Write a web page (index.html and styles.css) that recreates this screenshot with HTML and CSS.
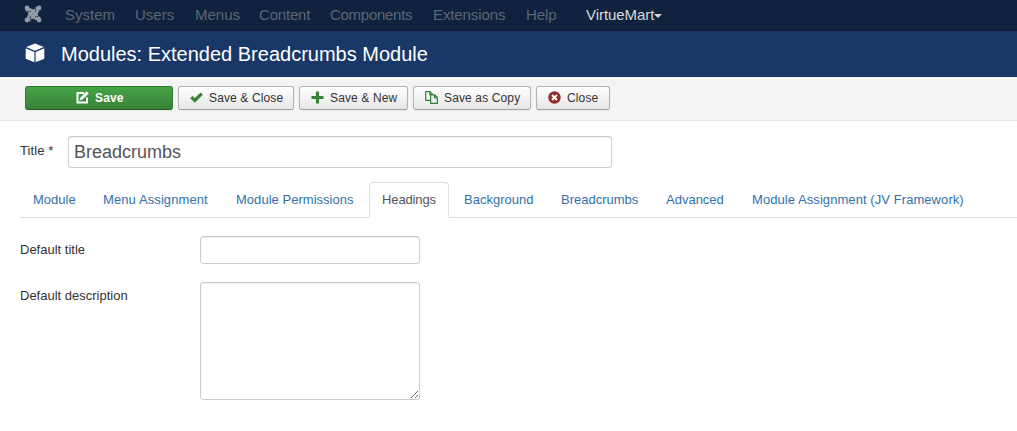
FILE: index.html
```html
<!DOCTYPE html>
<html lang="en">
<head>
<meta charset="utf-8">
<title>Modules: Extended Breadcrumbs Module</title>
<link rel="stylesheet" href="styles.css">
</head>
<body>
<nav class="navbar">
  <svg class="brand" viewBox="0 0 18 18" width="18" height="18">
    <g fill="none" stroke="currentColor" stroke-width="2.700">
      <path d="M3 6.500C3 4 6 3.600 7.800 5.400L13.500 11"/>
      <path d="M11.500 3C14 3 14.400 6 12.600 7.800L7 13.500"/>
      <path d="M15 11.500C15 14 12 14.400 10.200 12.600L4.500 7"/>
      <path d="M6.500 15C4 15 3.600 12 5.400 10.200L11 4.500"/>
    </g>
    <g fill="currentColor"><circle cx="3" cy="3" r="2.400"/><circle cx="15" cy="3" r="2.400"/><circle cx="3" cy="15" r="2.400"/><circle cx="15" cy="15" r="2.400"/></g>
  </svg>
  <ul class="menu">
    <li class="m-system">System</li><li class="m-users">Users</li><li class="m-menus">Menus</li><li class="m-content">Content</li><li class="m-components">Components</li><li class="m-extensions">Extensions</li><li class="m-help">Help</li>
    <li class="enabled">VirtueMart<span class="caret"></span></li>
  </ul>
</nav>
<header class="header">
  <svg class="cube" viewBox="0 0 20 20" width="20" height="20" fill="#fff">
    <path d="M10 .5 18.800 4 10 7.800 1.200 4Z"/><path d="M.7 5.200 9.400 8.900V19.300L.7 15.800Z"/><path d="M19.300 5.200 10.600 8.900V19.300L19.300 15.800Z"/>
  </svg>
  <h1>Modules: Extended Breadcrumbs Module</h1>
</header>
<div class="toolbar">
  <button class="btn save"><svg viewBox="0 0 13 13" width="13" height="13"><path d="M8 2H1.500V11.500H11V6.500" fill="none" stroke="#fff" stroke-width="2"/><path d="M3.500 9.500 4.500 6.500 10.600.3 12.800 2.500 6.500 8.600Z" fill="#fff"/></svg><span>Save</span></button>
  <button class="btn close-save"><svg viewBox="0 0 13 13" width="13" height="13"><path d="M1.300 6.200 4.800 9.500 11.700 2.700" fill="none" stroke="#378137" stroke-width="3.200"/></svg><span>Save &amp; Close</span></button>
  <button class="btn new"><svg viewBox="0 0 13 13" width="13" height="13"><path d="M6.500.5V12.500M.5 6.500H12.500" stroke="#378137" stroke-width="3"/></svg><span>Save &amp; New</span></button>
  <button class="btn copy"><svg viewBox="0 0 13 13" width="13" height="13" fill="none" stroke="#378137" stroke-width="1.200"><path d="M5 9.400H.7V.7H5L7.400 3.200V4M4.800.7V3.500H7"/><path d="M5.600 3.900H9.800L12.400 6.600V12.300H5.600ZM9.500 4V7H12.300"/></svg><span>Save as Copy</span></button>
  <button class="btn close"><svg viewBox="0 0 13 13" width="13" height="13"><circle cx="6.500" cy="6.500" r="6.200" fill="#942a25"/><path d="M4 4 9 9M9 4 4 9" stroke="#fff" stroke-width="2"/></svg><span>Close</span></button>
</div>
<main class="content">
  <div class="title-row"><label for="t">Title *</label><input id="t" class="title-input" value="Breadcrumbs"></div>
  <ul class="tabs">
    <li class="t-module">Module</li><li class="t-menu">Menu Assignment</li><li class="t-perm">Module Permissions</li><li class="t-head active">Headings</li><li class="t-back">Background</li><li class="t-bread">Breadcrumbs</li><li class="t-adv">Advanced</li><li class="t-jv">Module Assignment (JV Framework)</li>
  </ul>
  <div class="field"><label for="dt">Default title</label><input id="dt" class="text-input"></div>
  <div class="field"><label for="dd">Default description</label><textarea id="dd"></textarea></div>
</main>
</body>
</html>
```
FILE: styles.css
```css
* { box-sizing: border-box; }
body { margin: 0; background: #fff; color: #333; font: 13px/18px "Liberation Sans", Arial, sans-serif; overflow: hidden; }
ul { list-style: none; margin: 0; padding: 0; }
.navbar { display: flex; align-items: center; height: 31px; padding-left: 24px; background: #10223e; border-bottom: 1px solid #0c192e; color: #5c6676; }
.brand { margin: -2px 23px 0 0; color: #949ba6; }
.menu { display: flex; font-size: 15px; line-height: 30px; white-space: nowrap; }
.m-system { width: 70px; }
.m-users { width: 60px; }
.m-menus { width: 64px; }
.m-content { width: 71px; letter-spacing: -.2px; }
.m-components { width: 103px; letter-spacing: -.28px; }
.m-extensions { width: 93px; letter-spacing: -.1px; }
.m-help { width: 60px; letter-spacing: -.1px; }
.menu .enabled { display: flex; align-items: center; color: #d9d9d9; letter-spacing: -.05px; }
.caret { border: 4px solid transparent; border-top-color: #d9d9d9; border-bottom: 0; margin-top: 2px; }
.header { display: flex; align-items: center; height: 46px; padding-left: 25px; background: #1a3867; }
.cube { margin: -2px 15px 0 0; }
h1 { margin: 0; padding-left: 1px; color: #fff; font-size: 20px; font-weight: normal; line-height: 46px; }
.toolbar { display: flex; gap: 5px; height: 44px; padding: 9px 0 0 25px; background: #f4f4f4; border-bottom: 1px solid #e3e3e3; }
.btn { display: flex; align-items: center; height: 24px; padding: 0 0 0 11px; border: 1px solid #b3b3b3; border-bottom-color: #a2a2a2; border-radius: 3px; background: linear-gradient(#fff, #e6e6e6); color: #333; font: 12px/22px "Liberation Sans", Arial, sans-serif; letter-spacing: .13px; white-space: nowrap; box-shadow: 0 1px 2px rgba(0,0,0,.05); }
.btn svg { flex: none; margin: -2px 6px 0 0; }
.save { width: 148px; padding-left: 50px; background: linear-gradient(#46a546, #378137); border-color: #347a34; border-bottom-color: #265a26; color: #fff; font-weight: bold; }
.close-save { width: 116px; }
.new { width: 109px; }
.copy { width: 118px; }
.close { width: 74px; }
.content { padding: 15px 0 0 20px; }
.title-row { display: flex; height: 46px; }
.title-row label { width: 48px; padding-top: 6px; letter-spacing: .1px; }
input, textarea { margin: 0; border: 1px solid #ccc; border-radius: 3px; background: #fff; color: #555; outline: 0; box-shadow: inset 0 1px 1px rgba(0,0,0,.075); font-family: "Liberation Sans", Arial, sans-serif; }
.title-input { width: 544px; height: 32px; padding: 0 5px; font-size: 18px; }
.tabs { display: flex; height: 36px; border-bottom: 1px solid #ddd; color: #3071a9; white-space: nowrap; }
.tabs li { height: 36px; padding: 8px 12px; border: 1px solid transparent; border-radius: 4px 4px 0 0; margin-right: 2px; }
.tabs .active { border-color: #ddd; border-bottom-color: #fff; background: #fff; color: #555; }
.tabs .t-module { width: 68px; }
.tabs .t-menu { width: 131px; letter-spacing: .1px; }
.tabs .t-perm { width: 144px; letter-spacing: .03px; }
.tabs .t-head { width: 80px; letter-spacing: -.12px; }
.tabs .t-back { width: 95px; }
.tabs .t-bread { width: 103px; }
.tabs .t-adv { width: 84px; }
.tabs .t-jv { width: 238px; letter-spacing: .07px; }
.field { display: flex; margin-top: 18px; }
.field label { width: 180px; padding-top: 5px; }
.text-input { width: 220px; height: 28px; }
textarea { width: 220px; height: 118px; resize: both; }
```
